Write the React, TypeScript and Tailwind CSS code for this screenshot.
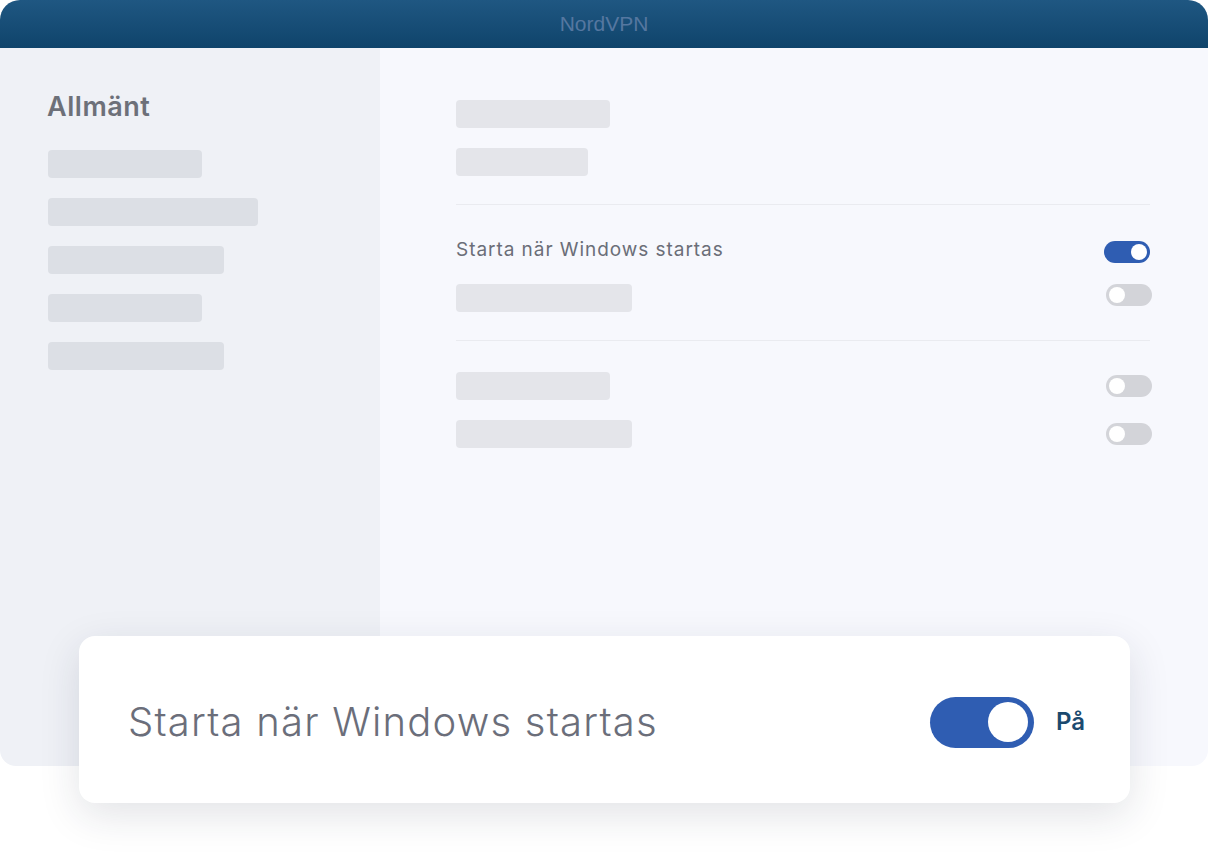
import { useState } from 'react';

function Bar({ w, tone = 'main' }: { w: string; tone?: 'main' | 'side' }) {
    return <div className={`h-7 rounded ${w} ${tone === 'side' ? 'bg-[#dcdfe5]' : 'bg-[#e4e5ea]'}`} />;
}

function SmallToggle({ on }: { on?: boolean }) {
    return (
        <div
            className={`flex h-[22px] w-[46px] items-center rounded-full px-[3px] ${
                on ? 'justify-end bg-[#2f5db2]' : 'justify-start bg-[#d3d4d9]'
            }`}
        >
            <div className="h-4 w-4 rounded-full bg-white" />
        </div>
    );
}

export default function App() {
    const [enabled, setEnabled] = useState(true);

    return (
        <div className="relative h-[852px] w-[1208px] bg-white font-['Inter',sans-serif]">
            {/* Window */}
            <div className="flex h-[766px] flex-col overflow-hidden rounded-t-[20px] rounded-b-[16px]">
                {/* Title bar */}
                <div className="flex h-12 shrink-0 items-center justify-center bg-gradient-to-b from-[#1f5782] to-[#0f446b]">
                    <span className="font-['Liberation_Sans',sans-serif] text-[21px] text-[#5577a0]">NordVPN</span>
                </div>

                <div className="flex flex-1">
                    {/* Sidebar */}
                    <div className="w-[380px] shrink-0 bg-[#eff1f6] pl-[48px] pt-[43px]">
                        <h2 className="-ml-px text-[27px] leading-8 font-semibold tracking-[0.02em] text-[#6d7079]">Allmänt</h2>
                        <div className="mt-[27px] flex flex-col gap-5">
                            <Bar tone="side" w="w-[154px]" />
                            <Bar tone="side" w="w-[210px]" />
                            <Bar tone="side" w="w-[176px]" />
                            <Bar tone="side" w="w-[154px]" />
                            <Bar tone="side" w="w-[176px]" />
                        </div>
                    </div>

                    {/* Content */}
                    <div className="flex-1 bg-[#f7f8fd] pl-[76px] pr-[56px] pt-[52px]">
                        <div className="flex flex-col gap-5 pb-7">
                            <Bar w="w-[154px]" />
                            <Bar w="w-[132px]" />
                        </div>
                        <div className="mr-[2px] h-px bg-[#eaebf0]" />

                        <div className="flex flex-col gap-[21px] pb-7 pt-9">
                            <div className="flex items-center justify-between">
                                <span className="-mt-1 text-[19px] leading-6 tracking-[0.05em] text-[#6b6e78]">
                                    Starta när Windows startas
                                </span>
                                <div className="mr-[2px]">
                                    <SmallToggle on />
                                </div>
                            </div>
                            <div className="flex items-start justify-between">
                                <Bar w="w-[176px]" />
                                <SmallToggle />
                            </div>
                        </div>
                        <div className="mr-[2px] h-px bg-[#eaebf0]" />

                        <div className="flex flex-col gap-5 pt-[31px]">
                            <div className="flex items-center justify-between">
                                <Bar w="w-[154px]" />
                                <SmallToggle />
                            </div>
                            <div className="flex items-center justify-between">
                                <Bar w="w-[176px]" />
                                <SmallToggle />
                            </div>
                        </div>
                    </div>
                </div>
            </div>

            {/* Floating card */}
            <div className="absolute left-[79px] top-[636px] flex h-[167px] w-[1051px] items-center justify-between rounded-2xl bg-white pl-[49px] pr-[45px] shadow-[0_12px_40px_rgba(30,35,60,0.13)]">
                <span className="mt-[5px] text-[40px] font-light tracking-[0.03em] text-[#6b6e7a]">
                    Starta när Windows startas
                </span>
                <div className="mt-[5px] flex items-center gap-[22px]">
                    <button
                        onClick={() => setEnabled(!enabled)}
                        className={`flex h-[51px] w-[104px] items-center rounded-full px-[6px] ${
                            enabled ? 'justify-end bg-[#2f5db2]' : 'justify-start bg-[#d3d4d9]'
                        }`}
                    >
                        <span className="h-10 w-10 rounded-full bg-white" />
                    </button>
                    <span className="text-[24px] font-semibold text-[#1b4a6f]">{enabled ? 'På' : 'Av'}</span>
                </div>
            </div>
        </div>
    );
}
